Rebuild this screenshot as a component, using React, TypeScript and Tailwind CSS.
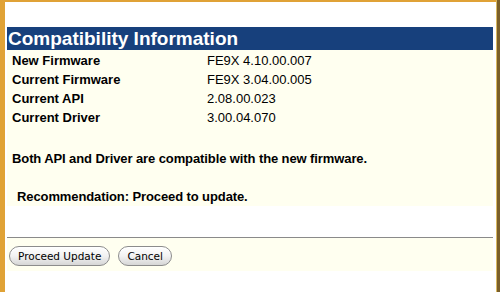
export default function App() {
  const rows = [
    ["New Firmware", "FE9X 4.10.00.007"],
    ["Current Firmware", "FE9X 3.04.00.005"],
    ["Current API", "2.08.00.023"],
    ["Current Driver", "3.00.04.070"],
  ];
  const btn =
    "h-[20px] px-[8px] rounded-full border border-[#8c8c8c] bg-gradient-to-b from-white via-[#f2f2f2] to-[#d6d6d6] text-[10.5px] text-black leading-none shadow-[inset_0_1px_0_#fff]";
  return (
    <div
      className="w-[500px] h-[292px] flex bg-white overflow-hidden"
      style={{ fontFamily: '"Liberation Sans", Arial, sans-serif' }}
    >
      <div className="w-[5px] bg-[#e0a236]" />
      <div className="flex-1 flex flex-col">
        <div className="h-[2px] bg-[#e0a236]" />
        <div className="flex-1 flex flex-col pl-[2px] pr-[3px]">
          <div className="h-[25px]" />
          <div className="h-[23px] bg-[#17407c] text-white font-bold text-[19px] leading-[23px] pl-[1px]">
            Compatibility Information
          </div>
          <div className="bg-[#fffff0] flex flex-col pt-[1px]">
            {rows.map(([k, v]) => (
              <div key={k} className="flex h-[19px] items-center text-[13px] text-black">
                <div className="w-[200px] pl-[5px] font-bold">{k}</div>
                <div>{v}</div>
              </div>
            ))}
            <div className="h-[22px]" />
            <div className="h-[19px] flex items-center pl-[5px] text-[13px] font-bold tracking-[-0.1px]">
              Both API and Driver are compatible with the new firmware.
            </div>
            <div className="h-[19px]" />
            <div className="h-[19px] flex items-center pl-[10px] text-[13px] font-bold tracking-[-0.1px]">
              Recommendation: Proceed to update.
            </div>
          </div>
          <div className="h-[31px]" />
          <div className="h-px bg-[#8a8a8a]" />
          <div className="bg-[#fffff0] pt-[8px] pb-[5px] flex items-center gap-[8px] pl-[2px]">
            <button className={btn} style={{ fontFamily: '"DejaVu Sans", sans-serif' }}>
              Proceed Update
            </button>
            <button className={btn} style={{ fontFamily: '"DejaVu Sans", sans-serif' }}>
              Cancel
            </button>
          </div>
          <div className="flex-1" />
        </div>
      </div>
      <div className="w-[4px] flex">
        <div className="w-[1px] bg-[#d9b860]" />
        <div className="flex-1 bg-[#7a5f2a]" />
      </div>
    </div>
  );
}
